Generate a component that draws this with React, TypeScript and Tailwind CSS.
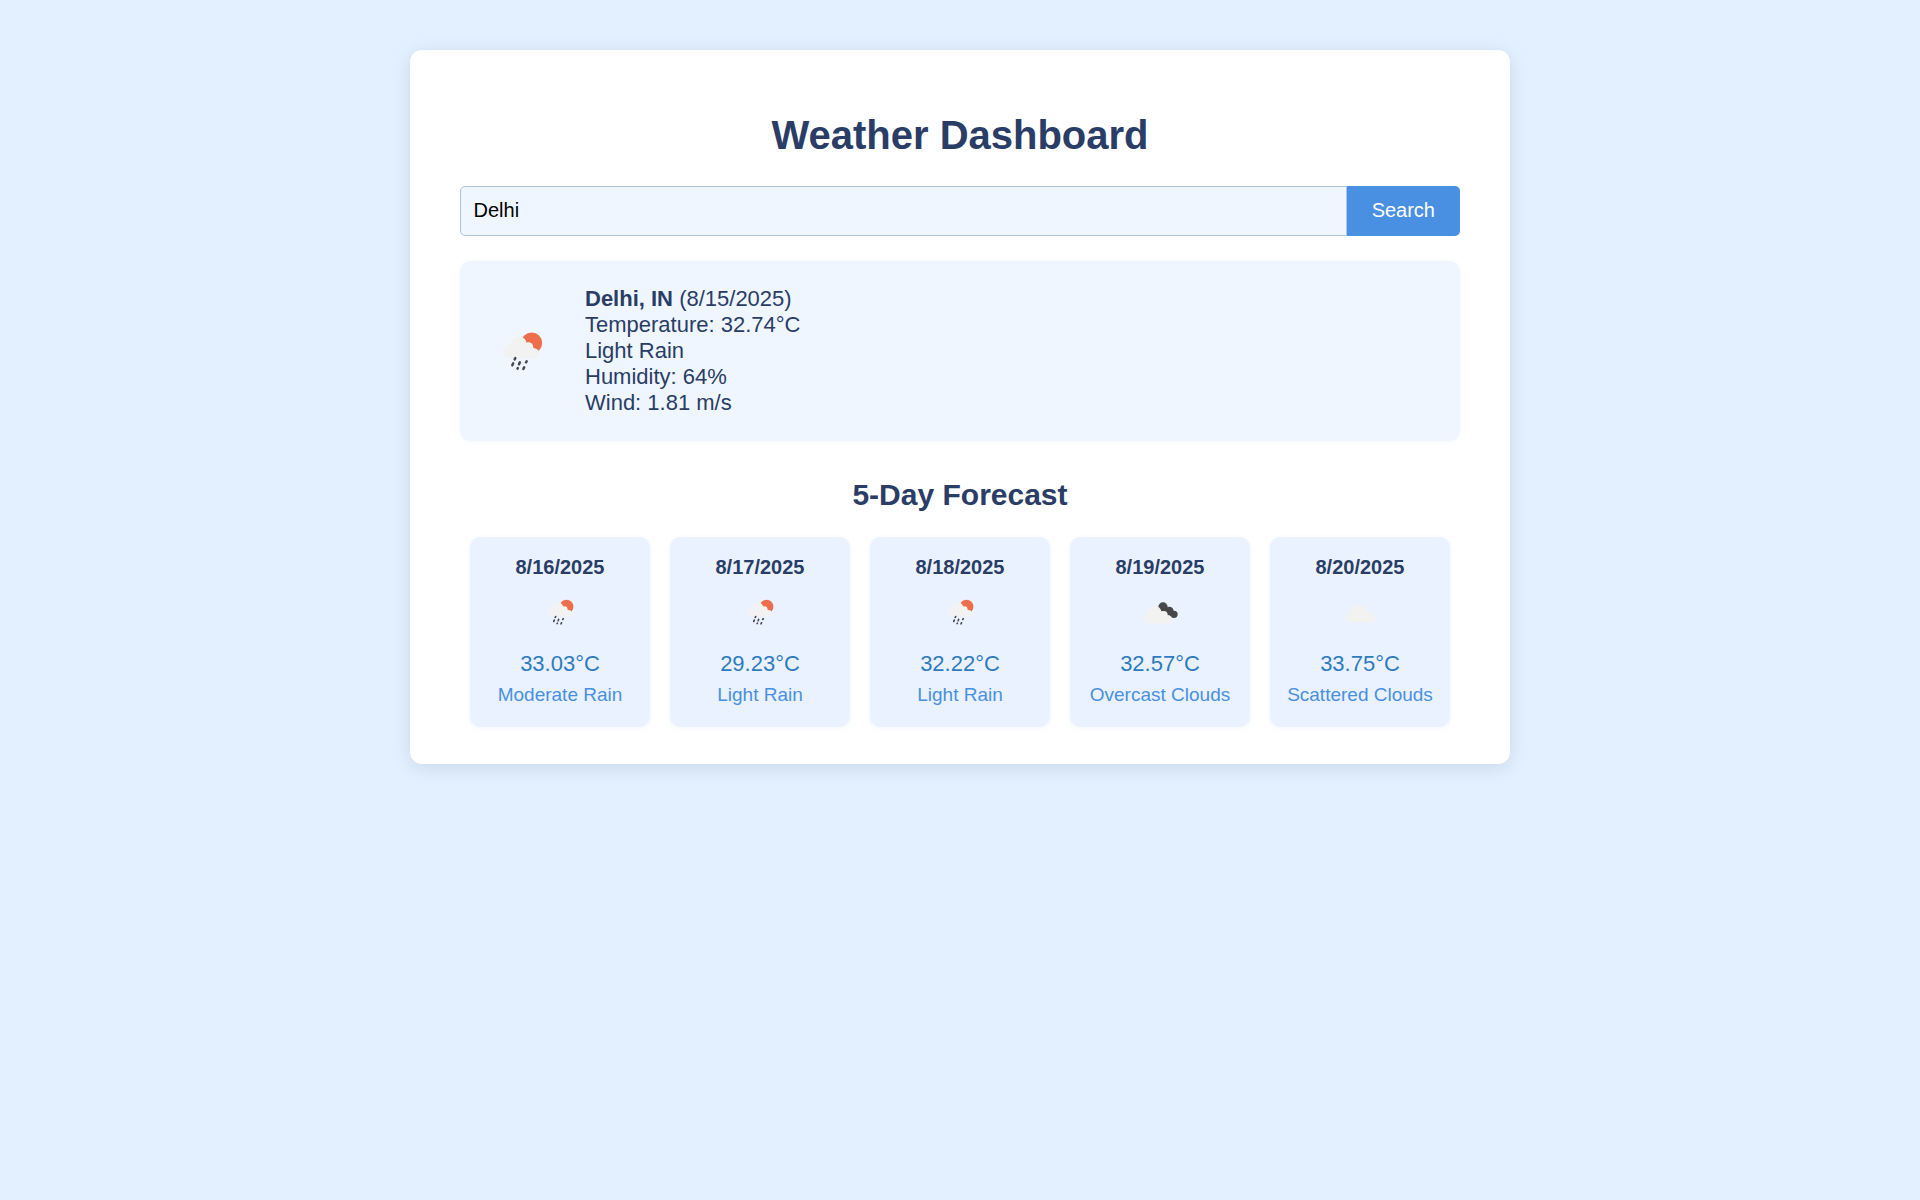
type IconKind = 'rain' | 'overcast' | 'scattered';

function RainArt() {
  return (
    <>
      <circle cx="125" cy="84" r="31.5" fill="#ec6e4c" />
      <g fill="#f2f2f2">
        <circle cx="62" cy="108" r="22" />
        <circle cx="86" cy="89" r="25" />
        <circle cx="115" cy="96" r="14.500" />
        <circle cx="133" cy="115" r="15.500" />
        <rect x="60" y="98" width="72" height="32" />
      </g>
      <g stroke="#48484a" strokeWidth="7.500" strokeLinecap="round">
        <path d="M76 129l-2 4M69.500 145l-2.500 6M89.500 142l-2.500 6M110 139l-2 3M83.500 159l-1 2M102.500 157l-2.500 5" />
      </g>
    </>
  );
}

function CloudArt() {
  return (
    <g fill="#f2f2f0">
      <circle cx="48" cy="81" r="15" />
      <circle cx="69" cy="61" r="18.500" />
      <circle cx="93" cy="71" r="12" />
      <circle cx="105" cy="83" r="14" />
      <rect x="46" y="70" width="60" height="26.500" rx="3" />
    </g>
  );
}

function OvercastArt() {
  return (
    <>
      <g fill="#48484a">
        <circle cx="84" cy="51" r="14" />
        <circle cx="103" cy="63" r="13" />
        <circle cx="117" cy="73" r="11" />
        <rect x="86" y="56" width="28" height="26" />
      </g>
      <g fill="#f2f2f0">
        <circle cx="41" cy="85" r="15.500" />
        <circle cx="60" cy="67" r="19" />
        <circle cx="86" cy="75" r="12" />
        <circle cx="98" cy="88" r="13" />
        <rect x="40" y="78" width="59" height="22.500" rx="3" />
      </g>
    </>
  );
}

function ForecastIcon({ kind }: { kind: IconKind }) {
  return (
    <svg viewBox="0 0 150 150" className="mt-[11px] size-[50px]" aria-hidden="true">
      {kind === 'rain' && (
        <g transform="translate(12 -5.4) scale(0.66)">
          <RainArt />
        </g>
      )}
      {kind === 'overcast' && <OvercastArt />}
      {kind === 'scattered' && <CloudArt />}
    </svg>
  );
}

const forecast: { date: string; temp: string; text: string; kind: IconKind }[] = [
  { date: '8/16/2025', temp: '33.03°C', text: 'Moderate Rain', kind: 'rain' },
  { date: '8/17/2025', temp: '29.23°C', text: 'Light Rain', kind: 'rain' },
  { date: '8/18/2025', temp: '32.22°C', text: 'Light Rain', kind: 'rain' },
  { date: '8/19/2025', temp: '32.57°C', text: 'Overcast Clouds', kind: 'overcast' },
  { date: '8/20/2025', temp: '33.75°C', text: 'Scattered Clouds', kind: 'scattered' },
];

export default function App() {
  return (
    <div className="min-h-screen bg-[#e2f0ff] pt-[50px] font-['Liberation_Sans',Arial,sans-serif] text-[#2a3d66]">
      <main className="mx-auto h-[714px] w-[1100px] rounded-xl bg-white px-[50px] pt-[62px] shadow-[0_4px_20px_rgba(0,0,0,0.1)]">
        <h1 className="text-center text-[40px] leading-[46px] font-bold">Weather Dashboard</h1>

        <div className="mt-7 flex h-[50px]">
          <input
            defaultValue="Delhi"
            className="min-w-0 flex-1 rounded-l-[5px] border border-[#b0c4de] bg-[#eff6ff] pt-0 pr-3 pb-0.5 pl-[12.5px] text-[20px] text-black outline-none"
          />
          <button className="rounded-r-[5px] bg-[#4a90e2] px-[25px] pb-0.5 text-[20px] text-white">Search</button>
        </div>

        <section className="mt-[25px] flex h-[180px] items-center rounded-[10px] bg-[#eff6ff] px-[25px] shadow-[0_1px_5px_rgba(74,144,226,0.06)]">
          <svg viewBox="0 0 210 210" className="mr-[25px] mb-0.5 ml-[5px] size-[70px]" aria-hidden="true">
            <RainArt />
          </svg>
          <div className="text-[22px] leading-[26px]">
            <p>
              <strong>Delhi, IN</strong> (8/15/2025)
            </p>
            <p>Temperature: 32.74°C</p>
            <p>Light Rain</p>
            <p>Humidity: 64%</p>
            <p>Wind: 1.81 m/s</p>
          </div>
        </section>

        <h2 className="mt-[37px] text-center text-[30px] leading-[34px] font-bold">5-Day Forecast</h2>

        <div className="mt-[25px] flex justify-center gap-5">
          {forecast.map((day) => (
            <article
              key={day.date}
              className="flex h-[190px] w-[180px] flex-col items-center rounded-[10px] bg-[#eaf2ff] pt-[19px] shadow-[0_1px_5px_rgba(74,144,226,0.08)]"
            >
              <h3 className="text-[20px] leading-[23px] font-bold">{day.date}</h3>
              <ForecastIcon kind={day.kind} />
              <p className="mt-[11px] text-[22px] leading-[25px] text-[#2f7bbf]">{day.temp}</p>
              <p className="mt-2 text-[19px] leading-[22px] whitespace-nowrap text-[#4a90e2]">{day.text}</p>
            </article>
          ))}
        </div>
      </main>
    </div>
  );
}
